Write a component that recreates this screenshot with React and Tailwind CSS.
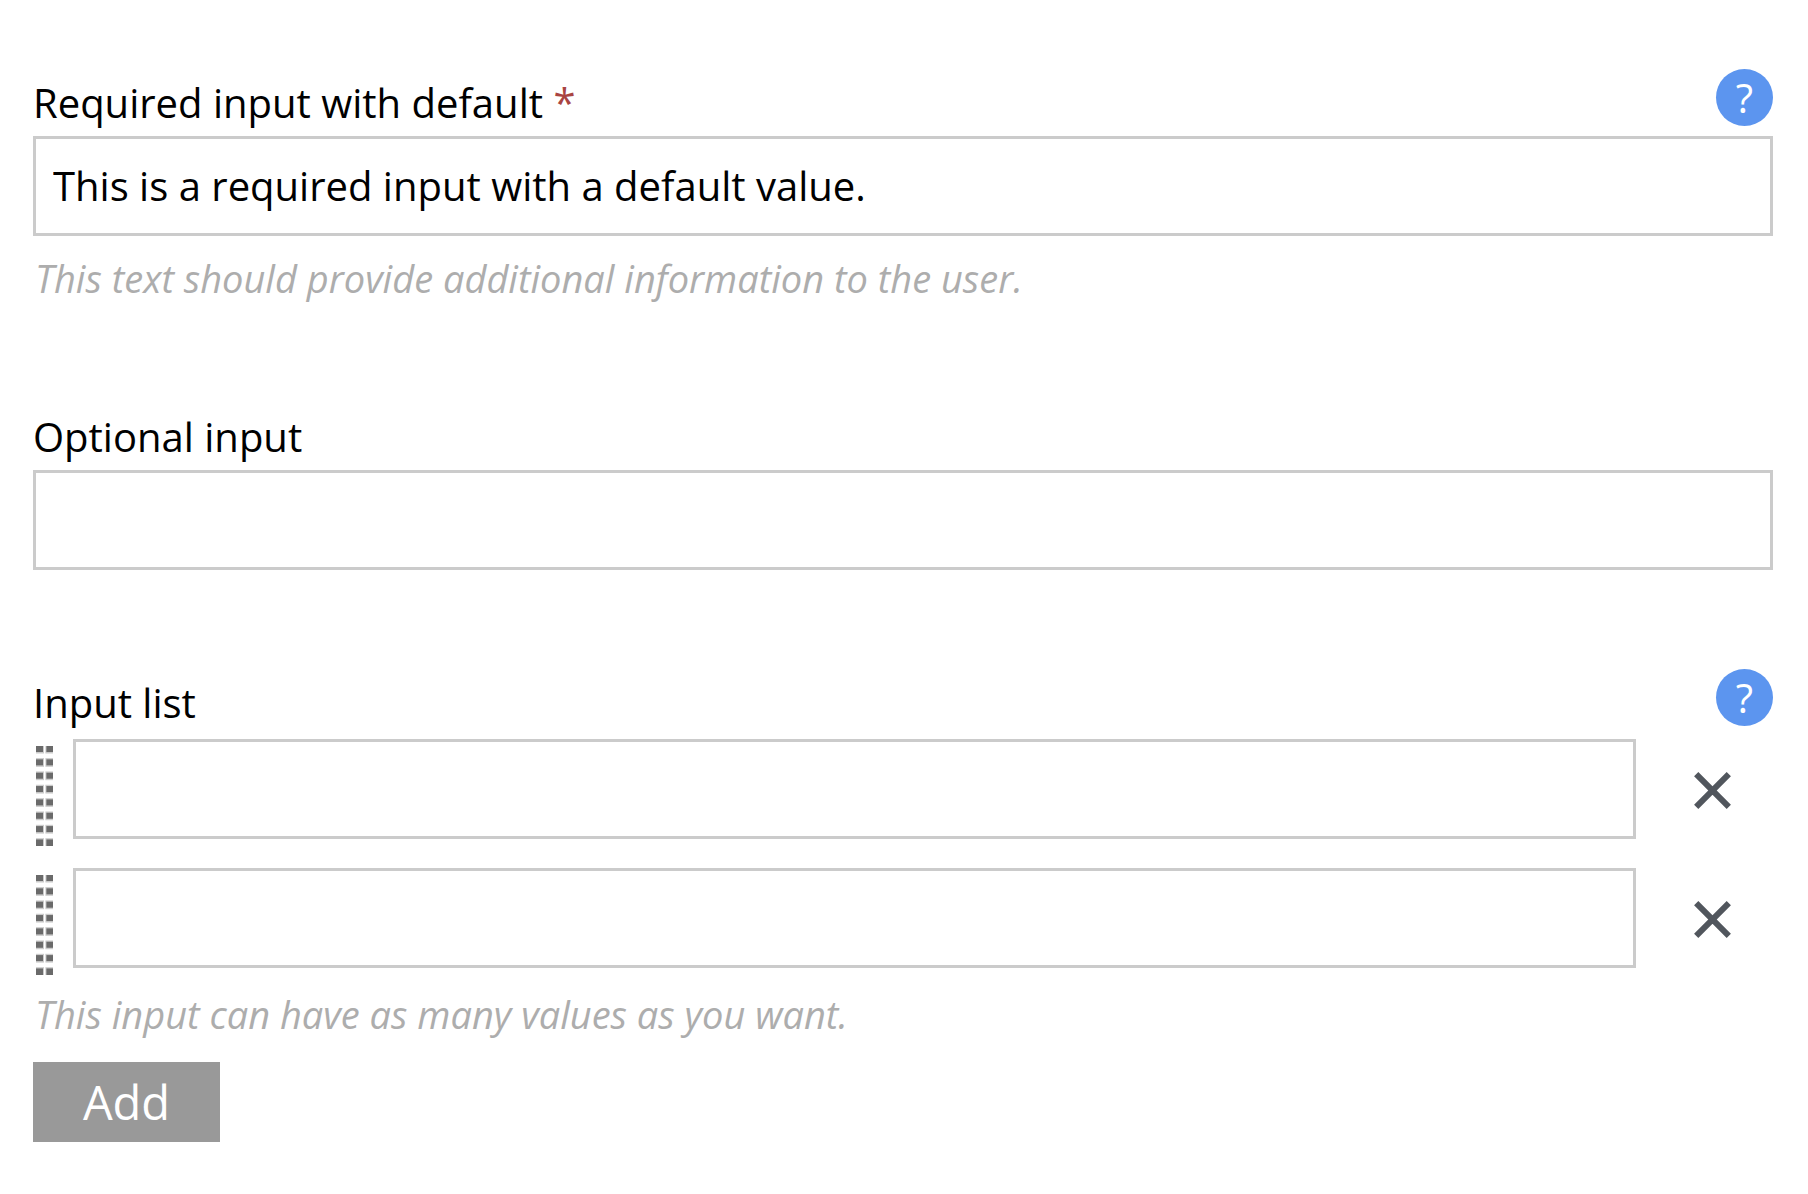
import { useState } from "react";

const boxClass =
  "block h-[100px] w-full min-w-0 border-[3px] border-[#cbcbcb] bg-white px-[17px] pb-[2px] text-[40px] text-black outline-none focus:border-[#5c95ef]";

function HelpButton({ label }) {
  return (
    <button
      type="button"
      aria-label={label}
      className="flex size-[57px] shrink-0 items-center justify-center rounded-full bg-[#5c95ef] text-[40px] leading-[56px] text-white"
    >
      ?
    </button>
  );
}

function Header({ htmlFor, children, help }) {
  return (
    <div className="flex items-start justify-between pb-[5px]">
      <label htmlFor={htmlFor} className="mt-[6px] text-[40px] leading-[56px]">
        {children}
      </label>
      {help && <HelpButton label={help} />}
    </div>
  );
}

function Hint({ id, children }) {
  return (
    <p id={id} className="pl-[2px] text-[38px] leading-[52px] text-[#adadad] italic">
      {children}
    </p>
  );
}

function DragHandle() {
  const rows = [0, 1, 2, 3, 4, 5, 6, 7];
  return (
    <svg
      aria-hidden="true"
      viewBox="0 0 17 100"
      className="mt-[7px] h-[100px] w-[17px] shrink-0 cursor-move"
    >
      {rows.map((r) => {
        const outerTop = r === 0 ? 0 : r * 13.35 - 1.3;
        const outerBottom = r === 7 ? 100 : r * 13.35 + 7.5;
        const top = r === 0 ? 0 : r * 13.35;
        const bottom = r === 7 ? 100 : r * 13.35 + 6;
        return (
          <g key={r}>
            <rect x="0" y={outerTop} width="8" height={outerBottom - outerTop} fill="#cbcbcb" />
            <rect x="9.4" y={outerTop} width="7.6" height={outerBottom - outerTop} fill="#cbcbcb" />
            <rect x="0" y={top} width="7" height={bottom - top} fill="#6a6a6a" />
            <rect x="10.4" y={top} width="6.6" height={bottom - top} fill="#6a6a6a" />
          </g>
        );
      })}
    </svg>
  );
}

function ListRow({ id, index, onRemove }) {
  return (
    <li className="flex items-start pl-[3px]">
      <DragHandle />
      <div className="ml-5 min-w-0 flex-1">
        <input
          id={id}
          type="text"
          aria-label={`Input list value ${index + 1}`}
          className={boxClass}
        />
      </div>
      <button
        type="button"
        aria-label={`Remove value ${index + 1}`}
        onClick={onRemove}
        className="mr-[32px] ml-[48px] flex h-[103px] w-[57px] shrink-0 items-center justify-center"
      >
        <svg viewBox="0 0 37 37" className="size-[37px]" fill="none" stroke="#51565d" strokeWidth="6">
          <path d="M2.2 2.2 34.8 34.8M34.8 2.2 2.2 34.8" />
        </svg>
      </button>
    </li>
  );
}

export default function App() {
  const [items, setItems] = useState([0, 1]);
  return (
    <form
      className="flex min-h-screen flex-col gap-[99px] bg-white pt-[69px] pr-[35px] pb-[52px] pl-[33px] font-['Open_Sans','Noto_Sans',sans-serif] text-black"
      onSubmit={(e) => e.preventDefault()}
    >
      <section>
        <Header htmlFor="required" help="Help for required input">
          Required input with default <span className="text-[#a94442]">*</span>
        </Header>
        <input
          id="required"
          type="text"
          aria-describedby="required-hint"
          defaultValue="This is a required input with a default value."
          className={boxClass}
        />
        <div className="pt-4">
          <Hint id="required-hint">
            This text should provide additional information to the user.
          </Hint>
        </div>
      </section>

      <section>
        <Header htmlFor="optional">Optional input</Header>
        <input id="optional" type="text" className={boxClass} />
      </section>

      <section>
        <Header htmlFor="item-0" help="Help for input list">
          Input list
        </Header>
        <ul className="flex flex-col gap-[22px] pt-[3px]">
          {items.map((key, i) => (
            <ListRow
              key={key}
              id={`item-${key}`}
              index={i}
              onRemove={() => setItems(items.filter((k) => k !== key))}
            />
          ))}
        </ul>
        <div className="pt-[13px]">
          <Hint>This input can have as many values as you want.</Hint>
        </div>
        <button
          type="button"
          onClick={() => setItems([...items, Math.max(-1, ...items) + 1])}
          className="mt-[22px] flex h-[80px] w-[187px] items-center justify-center bg-[#999999] text-[47px] leading-[64px] text-white"
        >
          Add
        </button>
      </section>
    </form>
  );
}
